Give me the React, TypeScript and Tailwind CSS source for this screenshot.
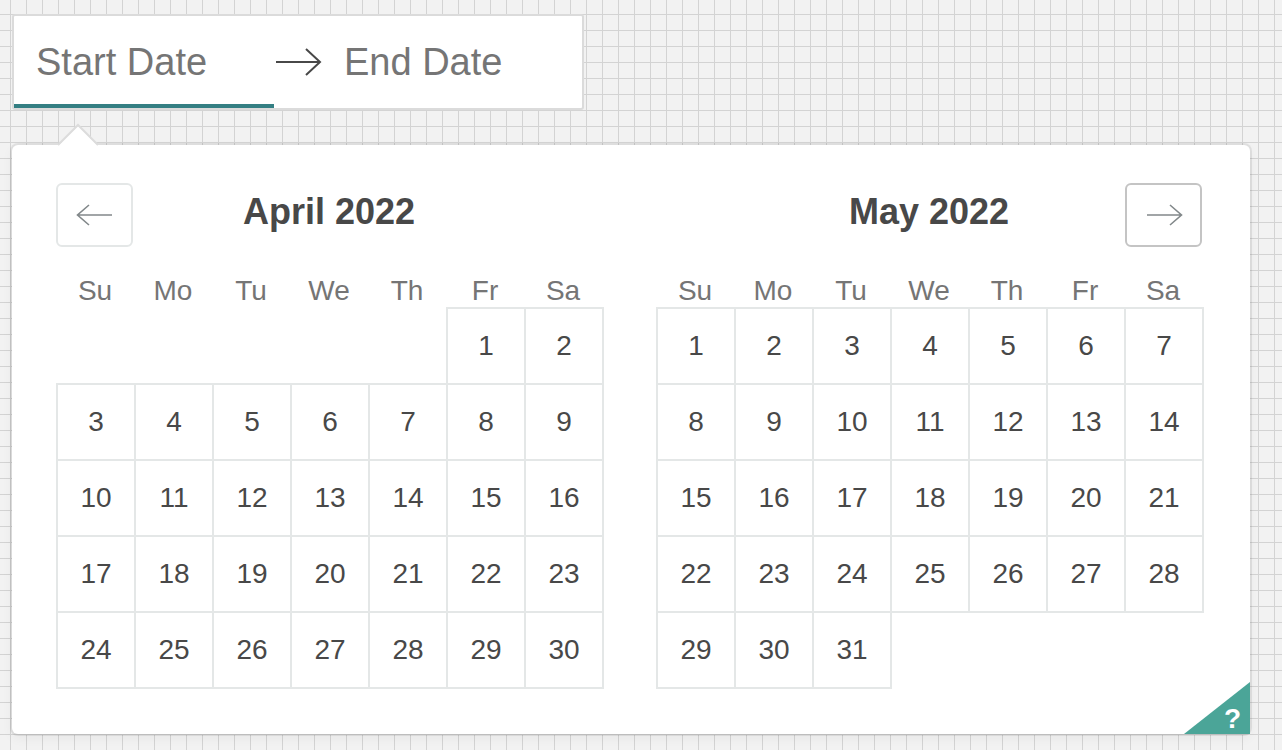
import React from "react";

type Month = { title: string; offset: number; days: number };

const MONTHS: Month[] = [
  { title: "April 2022", offset: 5, days: 30 },
  { title: "May 2022", offset: 0, days: 31 },
];

const WEEKDAYS = ["Su", "Mo", "Tu", "We", "Th", "Fr", "Sa"];

const COL_START = [
  "col-start-1",
  "col-start-2",
  "col-start-3",
  "col-start-4",
  "col-start-5",
  "col-start-6",
  "col-start-7",
];

function InputArrow() {
  return (
    <svg width="48" height="48" viewBox="0 0 48 48" fill="none" aria-hidden="true">
      <path d="M2 24H46M32 11L46 24L32 37" stroke="#484848" strokeWidth="2" />
    </svg>
  );
}

function NavButton({ dir, hovered }: { dir: "prev" | "next"; hovered?: boolean }) {
  return (
    <button
      type="button"
      aria-label={dir === "prev" ? "Previous month" : "Next month"}
      className={`flex h-[64px] w-[77px] shrink-0 items-center justify-center rounded-[6px] border-2 bg-white ${
        hovered ? "border-[#c4c4c4]" : "border-[#e4e7e7]"
      }`}
    >
      <svg width="38" height="38" viewBox="0 0 38 38" fill="none">
        {dir === "prev" ? (
          <path d="M36 19H1.5M13 9L1.5 19L13 29" stroke="#82888a" strokeWidth="1.6" />
        ) : (
          <path d="M2 19H36.5M25 9L36.5 19L25 29" stroke="#82888a" strokeWidth="1.6" />
        )}
      </svg>
    </button>
  );
}

function CalendarMonth({ month, side }: { month: Month; side: "left" | "right" }) {
  const days = Array.from({ length: month.days }, (_, i) => i + 1);

  return (
    <div className="w-[546px]">
      <div className="flex h-[64px] items-center">
        {side === "left" ? <NavButton dir="prev" /> : <div className="w-[77px]" />}
        <div className="flex-1 pb-[6px] text-center text-[36px] font-bold leading-none text-[#484848]">
          {month.title}
        </div>
        {side === "right" ? <NavButton dir="next" hovered /> : <div className="w-[77px]" />}
      </div>

      <div className="grid h-[60px] grid-cols-[repeat(7,78px)] items-end pb-[2px]">
        {WEEKDAYS.map((d) => (
          <div key={d} className="text-center text-[28px] leading-none text-[#757575]">
            {d}
          </div>
        ))}
      </div>

      <div className="grid grid-cols-[repeat(7,78px)] auto-rows-[76px]">
        {days.map((day) => (
          <div
            key={day}
            className={`flex h-[78px] w-[80px] items-center justify-center border-2 border-[#e4e7e7] bg-white text-[28px] leading-none text-[#484848] ${
              day === 1 ? COL_START[month.offset] : ""
            }`}
          >
            {day}
          </div>
        ))}
      </div>
    </div>
  );
}

export default function App() {
  return (
    <div className="min-h-[750px] w-full bg-[#f2f2f2] bg-[linear-gradient(to_right,#d3d3d3_1px,transparent_1px),linear-gradient(to_bottom,#d3d3d3_1px,transparent_1px)] bg-[size:16px_16px] bg-[position:10px_14px] pl-[12px] pt-[14px] font-['Liberation_Sans',Arial,sans-serif]">
      {/* date range input */}
      <div className="flex w-fit rounded-[3px] border-2 border-[#dbdbdb] bg-white">
        <div className="w-[260px] border-b-4 border-[#347f83] px-[22px] pb-[18px] pt-[22px] text-[38px] leading-[48px] text-[#757575]">
          Start Date
        </div>
        <div className="flex w-[48px] items-center justify-center">
          <InputArrow />
        </div>
        <div className="w-[260px] border-b-4 border-transparent px-[22px] pb-[18px] pt-[22px] text-[38px] leading-[48px] text-[#757575]">
          End Date
        </div>
      </div>

      {/* picker popover */}
      <div className="relative mt-[35px] flex h-[589px] w-[1238px] gap-[54px] rounded-[6px] bg-white pl-[44px] pt-[38px] shadow-[0_4px_12px_rgba(0,0,0,0.05),0_0_0_2px_rgba(0,0,0,0.07)]">
        <svg
          className="absolute left-[46px] top-[-22px]"
          width="40"
          height="23"
          viewBox="0 0 40 23"
          aria-hidden="true"
        >
          <path d="M0 23L20 3L40 23Z" fill="#fff" />
          <path d="M0 22L20 2L40 22" fill="none" stroke="#dcdcdc" strokeWidth="2" />
        </svg>

        {MONTHS.map((m, i) => (
          <CalendarMonth key={m.title} month={m} side={i === 0 ? "left" : "right"} />
        ))}

        <div className="absolute bottom-0 right-0 h-0 w-0 border-r-[66px] border-t-[52px] border-r-[#4ba598] border-t-transparent" />
        <span className="absolute bottom-[1px] right-[9px] text-[28px] font-bold leading-none text-white">
          ?
        </span>
      </div>
    </div>
  );
}
